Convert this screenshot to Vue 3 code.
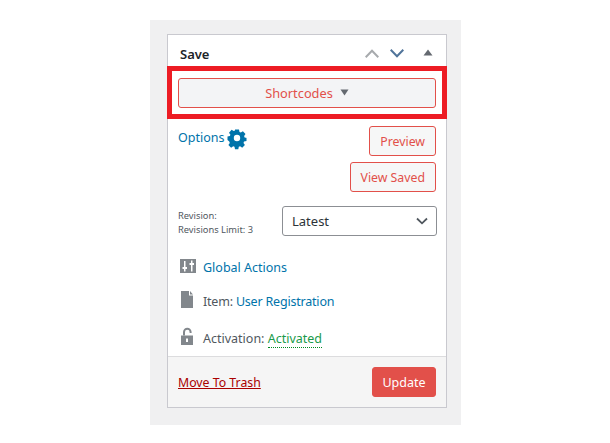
<template>
  <div class="page">
    <div class="postbox">
      <div class="box-head">
        <h2>Save</h2>
        <div class="head-actions">
          <svg class="chev up" width="14" height="9" viewBox="0 0 14 9"><path d="M0.700 8.300 7 1.800 13.300 8.300" /></svg>
          <svg class="chev down" width="14" height="9" viewBox="0 0 14 9"><path d="M0.700 0.700 7 7.200 13.300 0.700" /></svg>
          <svg class="toggle" width="10" height="7" viewBox="0 0 10 7"><path d="M5 0.500 9.500 6.500H0.500Z" /></svg>
        </div>
      </div>

      <!-- highlighted shortcode area -->
      <div class="highlight">
        <button class="btn shortcodes">
          Shortcodes
          <svg width="9" height="7" viewBox="0 0 9 7"><path d="M0.500 0.500H8.500L4.500 6.500Z" /></svg>
        </button>
      </div>

      <div class="box-body">
        <div class="options-row">
          <a class="options-link">
            Options
            <svg width="18" height="18" viewBox="0 0 18 18">
              <path fill-rule="evenodd" d="M7 0.500h4l.5 2.400 1.300.6 2.100-1.300 2.600 2.900-1.400 2 .5 1.300 2.400.5v0H18.500v3.200l-2.500.5-.5 1.300 1.400 2.100-2.700 2.700-2.100-1.400-1.300.5-.5 2.400H7l-.5-2.400-1.300-.5-2.100 1.400-2.700-2.700 1.400-2.100-.5-1.300L-.5 11V7.500l2.400-.5.5-1.300-1.400-2 2.600-2.900 2.100 1.300 1.300-.6ZM9 5.800a3.200 3.200 0 1 0 0 6.400 3.200 3.200 0 0 0 0-6.400Z" />
            </svg>
          </a>
          <div class="preview-btns">
            <button class="btn small">Preview</button>
            <button class="btn small">View Saved</button>
          </div>
        </div>

        <div class="revision-row">
          <div class="revision-label">
            <div>Revision:</div>
            <div>Revisions Limit: 3</div>
          </div>
          <div class="select">
            <span>Latest</span>
            <svg width="12" height="8" viewBox="0 0 12 8"><path d="M1 1.500 6 6.300 11 1.500" /></svg>
          </div>
        </div>

        <div class="info-row">
          <svg class="info-icon" width="18" height="14" viewBox="0 0 18 14">
            <path fill-rule="evenodd" d="M2 0h16v14H2ZM6 2v6H4.500v2H6v2.500h1.500V10H9V8H7.500V2ZM13 1.500v2.500h-1.500v2H13v6.500h1.500V6H16V4h-1.500V1.500Z" />
          </svg>
          <a class="link">Global Actions</a>
        </div>
        <div class="info-row item">
          <svg class="info-icon" width="18" height="17" viewBox="0 0 18 17">
            <path d="M3 0h8v4.500h4V17H3ZM12 0l3 3.500h-3Z" />
          </svg>
          <span class="item-text">Item: <a class="link">User Registration</a></span>
        </div>
        <div class="info-row activation">
          <svg class="info-icon" width="18" height="17" viewBox="0 0 18 17">
            <path fill-rule="evenodd" d="M3 7.500h12V17H3ZM8 10.500v3.500h2v-3.500Z" />
            <path class="shackle" d="M6 7.500V4a3.300 3.300 0 0 1 6.600 0v1" />
          </svg>
          <span>Activation: <a class="activated">Activated</a></span>
        </div>
      </div>

      <div class="box-foot">
        <a class="trash">Move To Trash</a>
        <button class="btn update">Update</button>
      </div>
    </div>
  </div>
</template>

<script setup>
</script>

<style>
html,
body {
  margin: 0;
  background: #fff;
}
</style>

<style scoped>
.page {
  width: 311px;
  height: 405px;
  margin: 20px 0 0 150px;
  padding: 14px 15px 0 17px;
  box-sizing: border-box;
  background: #f0f0f1;
  font-family: "Noto Sans", "Liberation Sans", sans-serif;
  font-size: 12.500px;
  color: #50575e;
}

.postbox {
  width: 280px;
  box-sizing: border-box;
  border: 1px solid #c9c9cf;
  background: #fff;
}

.box-head {
  height: 31px;
  display: flex;
  justify-content: space-between;
  align-items: center;
  padding: 6px 13px 0 12px;
  box-sizing: border-box;
}

.box-head h2 {
  margin: 0;
  font-size: 13px;
  font-weight: 600;
  color: #1d2327;
}

.head-actions {
  display: flex;
  align-items: center;
}

.chev {
  fill: none;
  stroke-width: 2;
}

.chev.up {
  stroke: #a7aaad;
  margin-right: 11px;
}

.chev.down {
  stroke: #50749a;
  margin-right: 19px;
}

.toggle {
  fill: #646970;
  margin-bottom: 3px;
}

.highlight {
  border: 5px solid #ed1c24;
  padding: 7px 5px 7px 6px;
  margin-left: -1px;
  margin-right: -1px;
  height: 53px;
  box-sizing: border-box;
}

.btn {
  font-family: inherit;
  font-size: 12.500px;
  border-radius: 3px;
  border: 1px solid #e2504a;
  background: #f6f7f7;
  color: #e2504a;
  padding: 0;
  height: 30px;
  box-sizing: border-box;
}

.shortcodes {
  width: 258px;
  display: flex;
  align-items: center;
  justify-content: center;
  gap: 7px;
  background: #f3f4f6;
  font-size: 12.800px;
}

.shortcodes svg {
  fill: #646970;
  margin-bottom: 2px;
}

.box-body {
  padding: 7px 10px 0 10px;
}

.options-row {
  display: flex;
  justify-content: space-between;
}

.options-link {
  display: flex;
  align-items: center;
  gap: 4px;
  height: 23px;
  color: #0073aa;
}

.options-link svg {
  fill: #0073aa;
  overflow: visible;
}

.preview-btns {
  display: flex;
  flex-direction: column;
  align-items: flex-end;
  gap: 6px;
}

.btn.small {
  padding: 0 10px;
  font-size: 12.300px;
}

.revision-row {
  display: flex;
  justify-content: space-between;
  align-items: center;
  margin-top: 13px;
}

.revision-label {
  font-size: 9.300px;
  line-height: 14px;
  color: #50575e;
  padding-top: 4px;
}

.select {
  width: 155px;
  height: 30px;
  margin-right: -1px;
  box-sizing: border-box;
  border: 1px solid #8c8f94;
  border-radius: 3px;
  display: flex;
  justify-content: space-between;
  align-items: center;
  padding: 0 8px 0 9px;
  font-size: 13px;
  color: #2c3338;
}

.select svg {
  fill: none;
  stroke: #50575e;
  stroke-width: 1.800;
}

.info-row {
  display: flex;
  align-items: center;
  gap: 7px;
  height: 20px;
  margin-top: 20px;
}

.info-row.item {
  margin-top: 14px;
}

.info-row.activation {
  margin-top: 17px;
}

.item-text {
  letter-spacing: -0.200px;
}

.info-icon {
  fill: #82878c;
  flex: none;
  margin-top: -3px;
  overflow: visible;
}

.shackle {
  fill: none;
  stroke: #82878c;
  stroke-width: 2;
}

.link {
  color: #0073aa;
}

.activated {
  color: #1a9a4a;
  border-bottom: 1px dotted #008a20;
}

.box-foot {
  margin-top: 8px;
  height: 51px;
  box-sizing: border-box;
  border-top: 1px solid #dcdcde;
  background: #f5f5f5;
  display: flex;
  justify-content: space-between;
  align-items: center;
  padding: 0 10px;
}

.trash {
  color: #a00;
  text-decoration: underline;
  font-size: 12.300px;
}

.btn.update {
  width: 64px;
  background: #e2504a;
  color: #fff;
  border-color: #e2504a;
}
</style>
